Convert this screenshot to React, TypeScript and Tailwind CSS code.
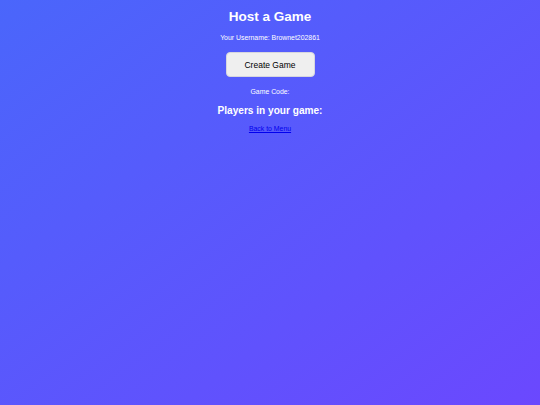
import React from 'react';

// Host screen: title, username, create button, code and player list
export default function App() {
    const username = 'Brownet202861';
    const players: string[] = [];

    return (
        <main className="min-h-[405px] w-full bg-linear-to-br/srgb from-[#4a66fb] to-[#6b48fe] font-['Liberation_Sans',Arial,sans-serif] text-white flex flex-col items-center pt-[8.7px] text-center">
            <h1 className="text-[13.5px] leading-[15.5px] font-bold">Host a Game</h1>
            <p className="mt-[9.5px] text-[6.9px] leading-[7.8px]">Your Username: {username}</p>

            <button className="mt-[11px] w-[89px] h-[25px] rounded-[4px] bg-[#efefef] border border-[#d6d6de] text-black text-[8.5px] leading-none">
                Create Game
            </button>

            <p className="mt-[10.4px] text-[6.9px] leading-[7.8px]">Game Code: </p>

            <h2 className="mt-[9.1px] text-[10.1px] leading-[11.6px] font-bold">Players in your game:</h2>
            <ul className="list-none p-0 m-0">
                {players.map(p => (
                    <li key={p}>{p}</li>
                ))}
            </ul>

            <a href="#" className="mt-[8.2px] text-[6.9px] leading-[7.8px] text-[#0000ee] underline">
                Back to Menu
            </a>
        </main>
    );
}
